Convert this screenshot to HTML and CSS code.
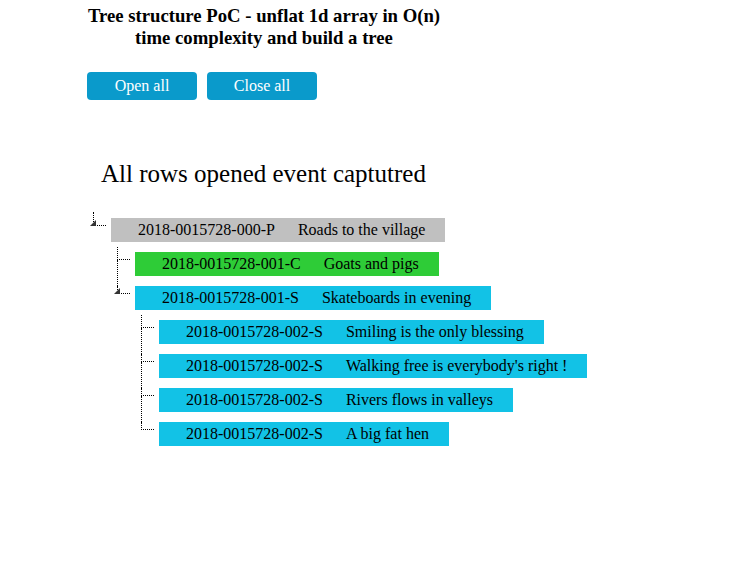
FILE: index.html
```html
<!DOCTYPE html>
<html lang="en">
<head>
<meta charset="utf-8">
<title>Tree structure PoC</title>
<link rel="stylesheet" href="styles.css">
</head>
<body>
<div class="page">
  <h1 class="title"><span class="line">Tree structure PoC - unflat 1d array in O(n)</span><span class="line">time complexity and build a tree</span></h1>
  <div class="actions">
    <button class="btn" type="button">Open all</button>
    <button class="btn" type="button">Close all</button>
  </div>
  <h2 class="status">All rows opened event captutred</h2>
  <ul class="tree">
    <li class="open">
      <span class="toggle"></span>
      <div class="row gray"><span class="id">2018-0015728-000-P</span><span class="name">Roads to the village</span></div>
      <ul>
        <li>
          <div class="row green"><span class="id">2018-0015728-001-C</span><span class="name">Goats and pigs</span></div>
        </li>
        <li class="open">
          <span class="toggle"></span>
          <div class="row cyan"><span class="id">2018-0015728-001-S</span><span class="name">Skateboards in evening</span></div>
          <ul>
            <li><div class="row cyan"><span class="id">2018-0015728-002-S</span><span class="name">Smiling is the only blessing</span></div></li>
            <li><div class="row cyan"><span class="id">2018-0015728-002-S</span><span class="name">Walking free is everybody's right !</span></div></li>
            <li><div class="row cyan"><span class="id">2018-0015728-002-S</span><span class="name">Rivers flows in valleys</span></div></li>
            <li><div class="row cyan"><span class="id">2018-0015728-002-S</span><span class="name">A big fat hen</span></div></li>
          </ul>
        </li>
      </ul>
    </li>
  </ul>
</div>
</body>
</html>
```

FILE: styles.css
```css
html, body {
  margin: 0;
  background: #ffffff;
  color: #000000;
  font-family: "Liberation Serif", "Times New Roman", serif;
}

.page {
  padding: 5px 0 0 87px;
}

.title {
  width: 354px;
  margin: 0;
  font-size: 18.72px;
  font-weight: bold;
  line-height: 22px;
  text-align: center;
}

.title .line {
  display: block;
  white-space: nowrap;
}

.actions {
  display: flex;
  gap: 10px;
  margin-top: 23px;
}

.btn {
  width: 110px;
  height: 28px;
  padding: 0;
  border: 0;
  border-radius: 4px;
  background: #0a9acb;
  color: #ffffff;
  font-family: "Liberation Serif", "Times New Roman", serif;
  font-size: 16px;
  line-height: 28px;
}

.status {
  margin: 59px 0 0 14px;
  font-size: 25px;
  font-weight: normal;
  line-height: 30px;
}

.tree {
  list-style: none;
  margin: 29px 0 0;
  padding: 0 0 0 24px;
}

.tree ul {
  list-style: none;
  margin: 0;
  padding: 0 0 0 24px;
}

.tree li {
  position: relative;
}

.tree ul li {
  margin-top: 10px;
}

.tree li::before {
  content: "";
  position: absolute;
  left: -18px;
  top: 0;
  width: 12px;
  height: 7px;
  border-left: 1px dotted #000;
  border-bottom: 1px dotted #000;
}

.tree ul > li:first-child::before {
  top: -5px;
  height: 12px;
}

.tree > li::before {
  top: -6px;
  height: 13px;
}

.tree li:not(:last-child)::after {
  content: "";
  position: absolute;
  left: -18px;
  top: 8px;
  bottom: -10px;
  border-left: 1px dotted #000;
}

.toggle {
  position: absolute;
  left: -21px;
  top: 2px;
  width: 0;
  height: 0;
  border-left: 6px solid transparent;
  border-bottom: 6px solid #333;
  z-index: 1;
}

.row {
  display: flex;
  width: max-content;
  height: 24px;
  line-height: 24px;
  padding: 0 20px 0 27px;
  font-size: 16px;
  white-space: nowrap;
}

.row .id {
  margin-right: 23px;
}

.gray {
  background: #c0c0c0;
}

.green {
  background: #2ecc37;
}

.cyan {
  background: #12c2e6;
}
```
